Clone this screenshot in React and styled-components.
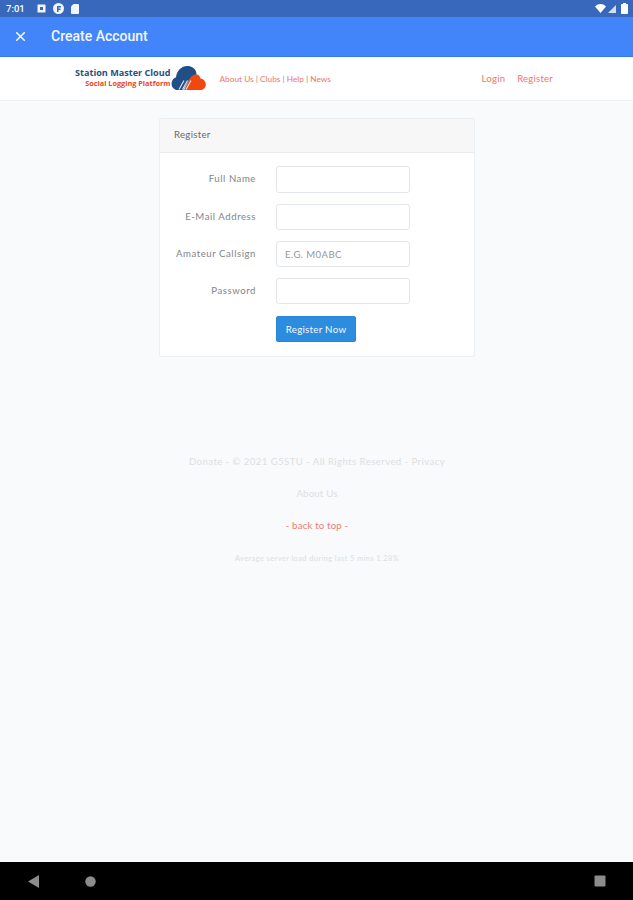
import React from "react";
import styled, { createGlobalStyle } from "styled-components";
import { X } from "lucide-react";

const GlobalStyle = createGlobalStyle`
  html, body {
    margin: 0;
    padding: 0;
    background: #f8fafc;
  }
  * {
    box-sizing: border-box;
  }
`;

const Screen = styled.div`
  width: 633px;
  height: 900px;
  display: flex;
  flex-direction: column;
  overflow: hidden;
  font-family: "Lato", "Liberation Sans", sans-serif;
  background: #f8fafc;
`;

// Android status bar
const StatusBar = styled.div`
  height: 17px;
  flex: none;
  display: flex;
  align-items: center;
  justify-content: space-between;
  padding: 0 5px 0 6px;
  background: #3868bb;
  color: #fff;
`;

const StatusGroup = styled.div`
  display: flex;
  align-items: center;
  gap: ${({ $gap }) => $gap}px;
`;

const Clock = styled.span`
  font-family: "Roboto", sans-serif;
  font-size: 9.5px;
  font-weight: 500;
  margin-right: 5px;
`;

const AppBar = styled.header`
  height: 40px;
  flex: none;
  display: flex;
  align-items: center;
  gap: 23px;
  padding: 0 0 1px 13px;
  background: #4285fa;
  border-bottom: 1px solid #2a7fe8;
  color: #fff;
`;

const AppTitle = styled.h1`
  margin: 0;
  font-family: "Roboto", sans-serif;
  font-size: 14px;
  font-weight: 500;
  color: #f2f7ff;
`;

const NavBar = styled.nav`
  height: 44px;
  flex: none;
  display: flex;
  align-items: center;
  padding: 0 80px 0 75px;
  background: #fff;
  border-bottom: 1px solid #f0f1f3;
`;

const Brand = styled.div`
  display: flex;
  align-items: center;
  gap: 1px;
  margin-top: -1px;
`;

const BrandText = styled.div`
  display: flex;
  flex-direction: column;
  align-items: flex-end;
  font-family: "Open Sans", sans-serif;
  font-weight: 700;
  white-space: nowrap;
`;

const BrandName = styled.span`
  font-size: 9.1px;
  line-height: 10px;
  color: #27507f;
`;

const BrandTag = styled.span`
  font-size: 7.3px;
  line-height: 10px;
  color: #e8491d;
`;

const NavLinks = styled.div`
  margin-left: 13px;
  font-size: 8.3px;
  color: #f0736a;
  white-space: nowrap;
`;

const Divider = styled.span`
  color: #8a8f96;
`;

const AuthLinks = styled.div`
  margin-left: auto;
  display: flex;
  gap: 12px;
  font-size: 9.6px;
  letter-spacing: 0.2px;
  color: #f4736a;
`;

const Main = styled.main`
  flex: 1;
  display: flex;
  flex-direction: column;
  align-items: center;
  padding-top: 17px;
`;

const Card = styled.section`
  width: 316px;
  margin-left: 1px;
  background: #fff;
  border: 1px solid #edeef0;
  border-radius: 2px;
`;

const CardHeader = styled.div`
  height: 34px;
  display: flex;
  align-items: center;
  padding: 0 0 2px 14px;
  background: #f7f7f7;
  border-bottom: 1px solid #ececec;
  font-size: 9.6px;
  letter-spacing: 0.3px;
  color: #636b6f;
`;

const Form = styled.form`
  display: flex;
  flex-direction: column;
  padding: 13px 0 14px;
`;

const Row = styled.div`
  display: grid;
  grid-template-columns: 96px 134px;
  column-gap: 20px;
  align-items: center;
  margin-bottom: ${({ $gap }) => $gap}px;
`;

const Label = styled.label`
  display: block;
  padding-bottom: 2px;
  text-align: right;
  font-size: 9.6px;
  letter-spacing: 0.55px;
  color: #7f8589;
  white-space: nowrap;
`;

const Input = styled.input`
  width: 134px;
  height: ${({ $h }) => $h}px;
  padding: 0 8px;
  background: #fff;
  border: 1px solid #e3e6ea;
  border-radius: 3px;
  font-family: inherit;
  font-size: 9.6px;
  letter-spacing: 0.4px;
  outline: none;
  &::placeholder {
    color: #93989c;
    opacity: 1;
  }
`;

const SubmitButton = styled.button`
  grid-column: 2;
  width: 80px;
  height: 26px;
  padding: 0;
  background: #2c8ce0;
  border: 1px solid #2a86d2;
  border-radius: 2px;
  font-family: inherit;
  font-size: 9.8px;
  letter-spacing: 0.25px;
  color: #f2f8fd;
`;

const Footer = styled.footer`
  margin-top: 98px;
  margin-left: 1px;
  display: flex;
  flex-direction: column;
  align-items: center;
`;

const FooterLine = styled.p`
  margin: 0;
  height: 14px;
  line-height: 14px;
  margin-bottom: ${({ $gap }) => $gap}px;
  font-size: ${({ $size }) => $size}px;
  letter-spacing: ${({ $track }) => $track}px;
  color: ${({ $accent }) => ($accent ? "#f0796f" : "#dcdfe2")};
`;

const SystemNav = styled.div`
  height: 38px;
  flex: none;
  display: flex;
  align-items: center;
  padding: 0 27px 0 28px;
  background: #000;
`;

const NavIcon = styled.svg`
  display: block;
  margin-right: ${({ $gap }) => $gap || 0}px;
  margin-left: ${({ $push }) => ($push ? "auto" : 0)};
`;

const LogoCloud = () => (
  <svg width="35" height="26" viewBox="0 0 35 26">
    <path
      d="M20 11 C23 8 29 9 29.500 13.500 C33 14 35 17 34.800 20 C34.500 23.500 32 25 29 25 L13 25 Z"
      fill="#f2470f"
    />
    <path
      d="M5 25 C1.500 23.500 0 20.500 .8 17 C1.500 14 3.500 12.500 5 12.500 C5.500 5.500 11 0.500 17 1 C22.500 1.500 25.500 5 25.500 9.500 C22.500 9.500 20.500 11 19 13.500 L12 25 Z"
      fill="#1f4f86"
    />
    <path d="M8 24.500 L13 15.500 M11.500 24.500 L16.500 15.500 M15 24.500 L20 15.500" stroke="#dbe7f2" strokeWidth="1.100" fill="none" />
  </svg>
);

const App = () => (
  <Screen>
    <GlobalStyle />
    <StatusBar>
      <StatusGroup $gap={7}>
        <Clock>7:01</Clock>
        <svg width="9" height="9" viewBox="0 0 9 9">
          <path d="M1 0.500h7a.5.5 0 0 1 .5.5v7a.5.5 0 0 1-.5.5H1A.5.5 0 0 1 .5 8V1A.5.5 0 0 1 1 .5Z M3 3v3h3V3Z" fill="#f2f5fb" fillRule="evenodd" />
        </svg>
        <svg width="11" height="11" viewBox="0 0 11 11">
          <path d="M5.500 0a5.500 5.500 0 1 0 0 11a5.500 5.500 0 0 0 0-11Z M4 3h4v1.500H5.500V5.500H7.500V7H5.500V9H4Z" fill="#f2f5fb" fillRule="evenodd" />
        </svg>
        <svg width="8" height="10" viewBox="0 0 8 10">
          <path d="M2.500 0H7a1 1 0 0 1 1 1v8a1 1 0 0 1-1 1H1a1 1 0 0 1-1-1V2.500Z" fill="#f2f5fb" />
        </svg>
      </StatusGroup>
      <StatusGroup $gap={2}>
        <svg width="11" height="9" viewBox="0 0 11 9">
          <path d="M0 2.500C3 -.8 8 -.8 11 2.500L5.500 9Z" fill="#fff" />
        </svg>
        <svg width="8" height="8" viewBox="0 0 8 8">
          <path d="M8 0V8H0Z" fill="#d5deef" />
        </svg>
        <svg width="7" height="11" viewBox="0 0 7 11" style={{ marginLeft: 3 }}>
          <path d="M2 0h3v1h1.200a.8.8 0 0 1 .8.8v8.400a.8.8 0 0 1-.8.8H.8a.8.8 0 0 1-.8-.8V1.800a.8.8 0 0 1 .8-.8H2Z" fill="#fff" />
        </svg>
      </StatusGroup>
    </StatusBar>

    <AppBar>
      <X size={15} strokeWidth={2.2} color="#fff" />
      <AppTitle>Create Account</AppTitle>
    </AppBar>

    <NavBar>
      <Brand>
        <BrandText>
          <BrandName>Station Master Cloud</BrandName>
          <BrandTag>Social Logging Platform</BrandTag>
        </BrandText>
        <LogoCloud />
      </Brand>
      <NavLinks>
        About Us <Divider>|</Divider> Clubs <Divider>|</Divider> Help <Divider>|</Divider> News
      </NavLinks>
      <AuthLinks>
        <span>Login</span>
        <span>Register</span>
      </AuthLinks>
    </NavBar>

    <Main>
      <Card>
        <CardHeader>Register</CardHeader>
        <Form onSubmit={(e) => e.preventDefault()}>
          <Row $gap={11}>
            <Label>Full Name</Label>
            <Input $h={27} />
          </Row>
          <Row $gap={11}>
            <Label>E-Mail Address</Label>
            <Input $h={26} />
          </Row>
          <Row $gap={11}>
            <Label>Amateur Callsign</Label>
            <Input $h={26} placeholder="E.G. M0ABC" />
          </Row>
          <Row $gap={12}>
            <Label>Password</Label>
            <Input $h={26} type="password" />
          </Row>
          <Row $gap={0}>
            <SubmitButton type="submit">Register Now</SubmitButton>
          </Row>
        </Form>
      </Card>

      <Footer>
        <FooterLine $size={9.6} $track={0.43} $gap={18}>Donate - © 2021 G5STU - All Rights Reserved - Privacy</FooterLine>
        <FooterLine $size={9.6} $track={0.2} $gap={18}>About Us</FooterLine>
        <FooterLine $size={9.6} $track={0.2} $gap={19} $accent>- back to top -</FooterLine>
        <FooterLine $size={7.4} $track={0.43} $gap={0}>Average server load during last 5 mins 1.28%</FooterLine>
      </Footer>
    </Main>

    <SystemNav>
      <NavIcon $gap={46} width="11" height="13" viewBox="0 0 11 13">
        <path d="M11 0V13L0 6.500Z" fill="#8c8c8c" />
      </NavIcon>
      <NavIcon width="11" height="11" viewBox="0 0 11 11">
        <circle cx="5.500" cy="5.500" r="5.200" fill="#8c8c8c" />
      </NavIcon>
      <NavIcon $push width="12" height="12" viewBox="0 0 12 12">
        <rect x="0.500" y="0.500" width="11" height="11" rx="1" fill="#8c8c8c" />
      </NavIcon>
    </SystemNav>
  </Screen>
);

export default App;
